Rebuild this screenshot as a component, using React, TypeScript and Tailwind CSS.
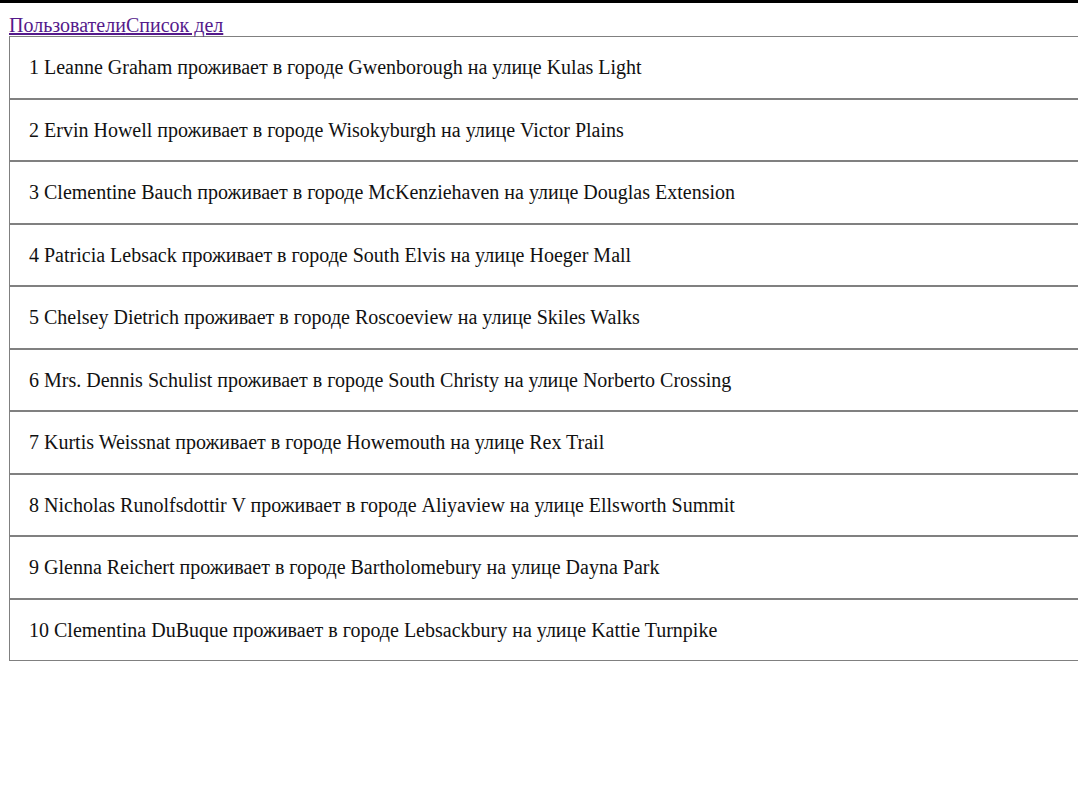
import React from "react";

const users = [
  "1 Leanne Graham проживает в городе Gwenborough на улице Kulas Light",
  "2 Ervin Howell проживает в городе Wisokyburgh на улице Victor Plains",
  "3 Clementine Bauch проживает в городе McKenziehaven на улице Douglas Extension",
  "4 Patricia Lebsack проживает в городе South Elvis на улице Hoeger Mall",
  "5 Chelsey Dietrich проживает в городе Roscoeview на улице Skiles Walks",
  "6 Mrs. Dennis Schulist проживает в городе South Christy на улице Norberto Crossing",
  "7 Kurtis Weissnat проживает в городе Howemouth на улице Rex Trail",
  "8 Nicholas Runolfsdottir V проживает в городе Aliyaview на улице Ellsworth Summit",
  "9 Glenna Reichert проживает в городе Bartholomebury на улице Dayna Park",
  "10 Clementina DuBuque проживает в городе Lebsackbury на улице Kattie Turnpike",
];

export default function App() {
  return (
    <div
      className="w-[1078px] h-[789px] overflow-hidden bg-white text-black"
      style={{ fontFamily: '"Liberation Serif", "Times New Roman", serif' }}
    >
      <div className="h-[3px] bg-black" />
      <div className="pl-[9px] pt-[12px]">
        <nav className="text-[20px] leading-[21px] text-[#551a8b]">
          <a href="#" className="underline">Пользователи</a>
          <a href="#" className="underline">Список дел</a>
        </nav>
        <ul className="w-[1100px]">
          {users.map((u) => (
            <li
              key={u}
              className="h-[62.5px] flex items-center border border-[#808080] pl-[19px] text-[20px] text-[#111]"
            >
              {u}
            </li>
          ))}
        </ul>
      </div>
    </div>
  );
}
